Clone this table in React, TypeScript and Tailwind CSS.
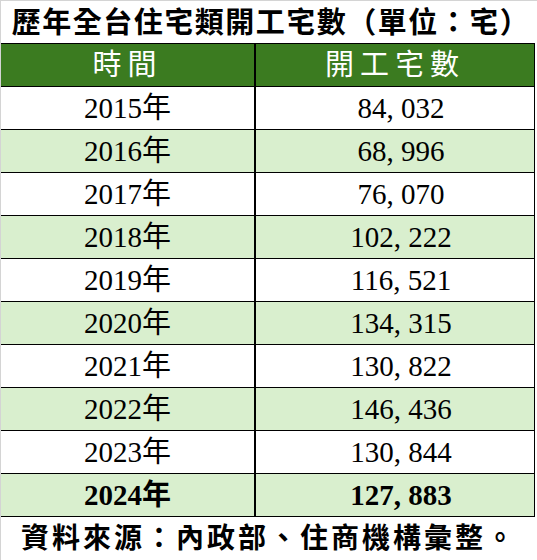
import React from 'react';

type Fila = { anio: string; cantidad: string };

const filas: Fila[] = [
  { anio: '2015', cantidad: '84, 032' },
  { anio: '2016', cantidad: '68, 996' },
  { anio: '2017', cantidad: '76, 070' },
  { anio: '2018', cantidad: '102, 222' },
  { anio: '2019', cantidad: '116, 521' },
  { anio: '2020', cantidad: '134, 315' },
  { anio: '2021', cantidad: '130, 822' },
  { anio: '2022', cantidad: '146, 436' },
  { anio: '2023', cantidad: '130, 844' },
  { anio: '2024', cantidad: '127, 883' },
];

const fuente = "font-['Liberation_Serif','Noto_Sans_CJK_TC',serif]";

const App: React.FC = () => {
  return (
    <div className={`w-[537px] h-[560px] bg-white border-l border-t border-[#d4d4d4] flex flex-col text-black ${fuente}`}>
      {/* Titulo */}
      <div className="h-[42px] flex items-center justify-center text-[29px] font-bold tracking-[1.5px] leading-none pt-[2px] pl-[4px]">
        歷年全台住宅類開工宅數（單位：宅）
      </div>

      {/* Tabla */}
      <div className="w-[534px] border-t border-r border-black">
        <div className="grid grid-cols-[255px_1fr] h-[43px] bg-[#3b7b20] text-white text-[29px] border-b border-black">
          <div className="flex items-center justify-center tracking-[6px] border-r-2 border-black">時間</div>
          <div className="flex items-center justify-center tracking-[6px]">開工宅數</div>
        </div>
        {filas.map((fila, i) => {
          const ultima = i === filas.length - 1;
          return (
            <div
              key={fila.anio}
              className={`grid grid-cols-[255px_1fr] h-[43px] text-[29px] border-b border-black ${
                i % 2 === 1 ? 'bg-[#d9efce]' : 'bg-white'
              } ${ultima ? 'font-bold' : ''}`}
            >
              <div className="flex items-center justify-center border-r-2 border-black leading-none">
                {fila.anio}年
              </div>
              <div className="flex items-center justify-center pl-[12px] leading-none">{fila.cantidad}</div>
            </div>
          );
        })}
      </div>

      {/* Fuente */}
      <div className="flex-1 flex items-center justify-center text-[28px] font-bold tracking-[3px] leading-none">
        資料來源：內政部、住商機構彙整。
      </div>
    </div>
  );
};

export default App;
